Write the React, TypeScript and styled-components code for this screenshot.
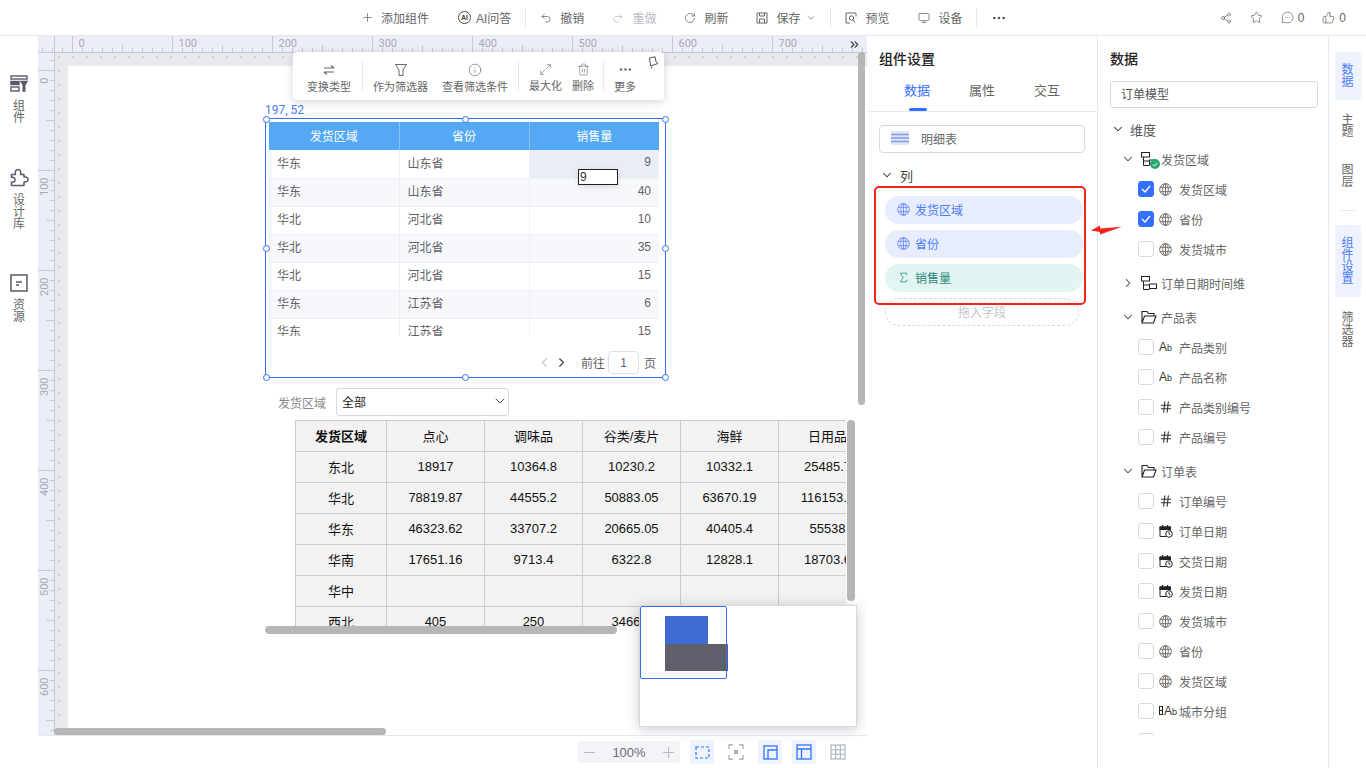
import React, { FC } from 'react';
import styled, { createGlobalStyle } from 'styled-components';
import {
  ChevronDown,
  ChevronLeft,
  ChevronRight,
  ChevronsRight,
  Hash,
  Info,
  Maximize2,
  MessageCircleMore,
  Minus,
  Monitor,
  MoreHorizontal,
  Plus,
  Redo2,
  RotateCw,
  Share2,
  Sigma,
  Star,
  ThumbsUp,
  Trash2,
  Undo2,
} from 'lucide-react';

const GlobalStyle = createGlobalStyle`
  html, body {
    margin: 0;
    padding: 0;
    height: 100%;
    overflow: hidden;
    background: #fff;
  }
  body {
    font-family: "Liberation Sans", "Noto Sans CJK SC", sans-serif;
    font-size: 12px;
    color: #666;
  }
  * {
    box-sizing: border-box;
  }
`;

const Shell = styled.div`
  width: 1366px;
  height: 768px;
  display: flex;
  flex-direction: column;
  overflow: hidden;
`;

/* top bar */
const TopBar = styled.header`
  height: 36px;
  flex: none;
  display: flex;
  align-items: center;
  gap: 14px;
  padding: 0 20px 0 361px;
  border-bottom: 1px solid #e8e9ef;
`;

const TopGroup = styled.div<{ $gap?: number }>`
  display: flex;
  align-items: center;
  gap: ${(p) => p.$gap ?? 29}px;
`;

const TopDivider = styled.i`
  width: 1px;
  height: 20px;
  background: #e8e9ef;
`;

const TopAction = styled.div<{ $off?: boolean; $gap?: number }>`
  display: flex;
  align-items: center;
  gap: ${(p) => p.$gap ?? 8}px;
  color: ${(p) => (p.$off ? '#b9bbc4' : '#666')};
  white-space: nowrap;
`;

const SaveCaret = styled.span`
  display: inline-flex;
  margin-left: -2px;
`;

const TopRight = styled.div`
  margin-left: auto;
  display: flex;
  align-items: center;
  gap: 18px;
`;

const Counter = styled.div`
  display: flex;
  align-items: center;
  gap: 4px;
  color: #666;
`;

const Main = styled.div`
  flex: 1;
  min-height: 0;
  display: flex;
  position: relative;
`;

/* left rail */
const LeftRail = styled.nav`
  width: 38px;
  flex: none;
  padding-top: 39px;
  display: flex;
  flex-direction: column;
  align-items: center;
`;

const RailEntry = styled.div<{ $h: number }>`
  height: ${(p) => p.$h}px;
  display: flex;
  flex-direction: column;
  align-items: center;
  gap: 7px;
`;

const StackText = styled.div<{ $active?: boolean }>`
  width: 12px;
  font-size: 12px;
  line-height: 12px;
  color: ${(p) => (p.$active ? '#4a7cf6' : '#666')};
`;

/* canvas */
const CanvasArea = styled.section`
  width: 829px;
  flex: none;
  display: flex;
  flex-direction: column;
  position: relative;
  overflow: hidden;
`;

const RulerRow = styled.div`
  height: 17px;
  flex: none;
  background: #eceef7;
`;

const StageRow = styled.div`
  flex: 1;
  min-height: 0;
  display: flex;
`;

const SideRuler = styled.div`
  width: 17px;
  flex: none;
  background: #eceef7;
`;

const Stage = styled.div`
  flex: 1;
  padding: 13px 0 0 13px;
  background-color: #e9eaee;
  background-image: radial-gradient(circle, #cfd0d7 1px, transparent 1.2px);
  background-size: 14px 14px;
  background-position: -3px -3px;
`;

const Page = styled.div`
  height: 100%;
  background: #fff;
`;

const BottomBar = styled.footer`
  height: 33px;
  flex: none;
  display: flex;
  align-items: center;
  padding-left: 540px;
  gap: 10px;
  background: #fff;
  border-top: 1px solid #e8e9ef;
`;

const ZoomBox = styled.div`
  width: 102px;
  height: 22px;
  display: flex;
  align-items: center;
  justify-content: space-between;
  padding: 0 3px;
  border-radius: 3px;
  font-size: 13px;
  background: #f3f4f8;
  color: #6a6d7c;
`;

const ViewButton = styled.div<{ $active?: boolean }>`
  width: 24px;
  height: 24px;
  display: flex;
  align-items: center;
  justify-content: center;
  border-radius: 3px;
  background: ${(p) => (p.$active ? '#eef3fe' : 'transparent')};
`;

const ScrollThumb = styled.i<{ $x: number; $y: number; $w: number; $h: number }>`
  position: absolute;
  left: ${(p) => p.$x}px;
  top: ${(p) => p.$y}px;
  width: ${(p) => p.$w}px;
  height: ${(p) => p.$h}px;
  border-radius: 4px;
  background: #b6b6b6;
  z-index: 6;
`;

const RulerExpand = styled.div`
  position: absolute;
  right: 6px;
  top: 0;
  height: 16px;
  display: flex;
  align-items: center;
  color: #444;
`;

/* floating toolbar */
const FloatBar = styled.div`
  position: absolute;
  left: 255px;
  top: 16px;
  width: 371px;
  height: 48px;
  display: flex;
  align-items: center;
  padding: 4px 0 0 14px;
  background: #fff;
  border-radius: 4px;
  box-shadow: 0 2px 8px rgba(60, 64, 90, 0.22);
  z-index: 5;
`;

const FloatItem = styled.div<{ $gapRight?: number }>`
  display: flex;
  flex-direction: column;
  align-items: center;
  gap: 4px;
  margin-right: ${(p) => p.$gapRight ?? 0}px;
  font-size: 11px;
  line-height: 13px;
  white-space: nowrap;
`;

const FloatDivider = styled.i`
  width: 1px;
  height: 30px;
  margin: -4px 10.5px 0;
  background: #e6e7ec;
`;

const PinHolder = styled.div`
  position: absolute;
  right: 5px;
  top: 4px;
`;

/* first widget */
const CoordLabel = styled.div`
  position: absolute;
  left: 227px;
  top: 67px;
  font-family: Roboto, "Liberation Sans", sans-serif;
  font-size: 12px;
  line-height: 14px;
  color: #4a7cf6;
`;

const Selection = styled.div`
  position: absolute;
  left: 227px;
  top: 82px;
  width: 401px;
  height: 260px;
  padding: 3px 3px 0;
  display: flex;
  flex-direction: column;
  border: 1px solid #3370ff;
`;

const Handle = styled.i<{ $x: string; $y: string }>`
  position: absolute;
  left: ${(p) => p.$x};
  top: ${(p) => p.$y};
  width: 7px;
  height: 7px;
  margin: -3.5px 0 0 -3.5px;
  border: 1px solid #3370ff;
  border-radius: 50%;
  background: #fff;
`;

const TableClip = styled.div`
  height: 214px;
  flex: none;
  overflow: hidden;
`;

const DetailTable = styled.table`
  width: 390px;
  table-layout: fixed;
  border-collapse: collapse;
  font-size: 12px;
  color: #606266;
`;

const DetailHead = styled.th`
  height: 28px;
  padding: 0 0 2px;
  font-weight: 400;
  color: #fff;
  background: #55a9f4;
  border-right: 1px solid #8ac4f7;
  &:last-child {
    border-right: 0;
  }
`;

const DetailRow = styled.tr<{ $even: boolean }>`
  height: 28px;
  background: ${(p) => (p.$even ? '#f7f8fc' : '#fff')};
  border-bottom: 1px solid #eef0f6;
`;

const DetailCell = styled.td<{ $num?: boolean; $selected?: boolean }>`
  padding: 0 8px 3px;
  text-align: ${(p) => (p.$num ? 'right' : 'left')};
  background: ${(p) => (p.$selected ? '#e9edf6' : 'transparent')};
  border-right: 1px solid #eef0f6;
  &:last-child {
    border-right: 0;
  }
`;

const CellEditor = styled.div`
  position: absolute;
  left: 312px;
  top: 50px;
  width: 40px;
  height: 16px;
  padding-left: 1px;
  font-size: 12px;
  line-height: 14px;
  color: #333;
  background: #fff;
  border: 1px solid #222;
  box-shadow: 0 2px 6px rgba(0, 0, 0, 0.12);
`;

const Pager = styled.div`
  flex: 1;
  display: flex;
  align-items: center;
  justify-content: flex-end;
  gap: 3px;
  padding: 12px 6px 0 0;
  color: #606266;
`;

const PagerArrows = styled.div`
  display: flex;
  align-items: center;
  gap: 2px;
  margin: 0 9px 0 0;
`;

const PagerInput = styled.div`
  width: 31px;
  height: 23px;
  margin-right: 2px;
  display: flex;
  align-items: center;
  justify-content: center;
  border: 1px solid #dcdfe6;
  border-radius: 4px;
`;

/* filter + pivot */
const FilterRow = styled.div`
  position: absolute;
  left: 240px;
  top: 352px;
  display: flex;
  align-items: center;
  gap: 10px;
  color: #888;
`;

const FilterSelect = styled.div`
  width: 173px;
  height: 28px;
  display: flex;
  align-items: center;
  justify-content: space-between;
  padding: 0 0 2px 5px;
  color: #222;
  background: #fff;
  border: 1px solid #d7d9e6;
  border-radius: 3px;
`;

const PivotClip = styled.div`
  position: absolute;
  left: 257px;
  top: 384px;
  width: 551px;
  height: 207px;
  overflow: hidden;
`;

const PivotTable = styled.table`
  width: 579px;
  table-layout: fixed;
  border-collapse: collapse;
  font-size: 13px;
  color: #111;
  background: #f2f2f2;
`;

const PivotCell = styled.td<{ $head?: boolean }>`
  height: ${(p) => (p.$head ? 30 : 31)}px;
  padding: 0 0 2px;
  text-align: center;
  white-space: nowrap;
  font-weight: ${(p) => (p.$head ? 700 : 400)};
  border: 1px solid #cbcbcb;
`;

/* minimap */
const MiniMap = styled.div`
  position: absolute;
  left: 601px;
  top: 569px;
  width: 218px;
  height: 122px;
  background: #fff;
  border: 1px solid #d9d9d9;
  box-shadow: 0 2px 12px rgba(60, 64, 90, 0.28);
  z-index: 7;
`;

const MiniFrame = styled.div`
  position: absolute;
  left: 0;
  top: 0;
  width: 87px;
  height: 73px;
  border: 1px solid #3370ff;
  border-radius: 2px;
  z-index: 2;
`;

const MiniBlock = styled.i<{ $x: number; $y: number; $w: number; $h: number; $c: string }>`
  position: absolute;
  left: ${(p) => p.$x}px;
  top: ${(p) => p.$y}px;
  width: ${(p) => p.$w}px;
  height: ${(p) => p.$h}px;
  background: ${(p) => p.$c};
`;

/* side panels */
const Panel = styled.aside`
  width: 231px;
  flex: none;
  display: flex;
  flex-direction: column;
  position: relative;
  border-right: 1px solid #e8e9ef;
`;

const PanelTitle = styled.h2`
  height: 36px;
  margin: 5px 0 0 12px;
  font-size: 14px;
  line-height: 36px;
  font-weight: 500;
  color: #222;
`;

const Tabs = styled.div`
  height: 35px;
  flex: none;
  display: flex;
  padding-left: 17.5px;
  border-bottom: 1px solid #e8e9ef;
`;

const Tab = styled.div<{ $active?: boolean }>`
  width: 65px;
  position: relative;
  text-align: center;
  font-size: 13px;
  line-height: 28px;
  color: ${(p) => (p.$active ? '#3370ff' : '#666')};
  ${(p) =>
    p.$active &&
    `&::after {
      content: '';
      position: absolute;
      left: 24px;
      bottom: 0;
      width: 18px;
      height: 3px;
      border-radius: 2px;
      background: #3370ff;
    }`}
`;

const TypePicker = styled.div`
  height: 28px;
  margin: 13px 12px 0;
  display: flex;
  align-items: center;
  gap: 12px;
  padding: 0 0 2px 11px;
  border: 1px solid #d7d9e6;
  border-radius: 4px;
`;

const ColumnsHead = styled.div`
  height: 20px;
  margin-top: 12px;
  padding-left: 13px;
  display: flex;
  align-items: center;
  gap: 6px;
  font-size: 13px;
  color: #444;
`;

const PillList = styled.div`
  margin: 11px 0 0 18px;
  display: flex;
  flex-direction: column;
  gap: 6px;
`;

const Pill = styled.div<{ $measure?: boolean }>`
  width: 198px;
  height: 28px;
  display: flex;
  align-items: center;
  gap: 5px;
  padding: 0 0 1px 12px;
  border-radius: 14px;
  color: ${(p) => (p.$measure ? '#2c8a7a' : '#4a7cf6')};
  background: ${(p) => (p.$measure ? '#e3f5f3' : '#e8edfe')};
`;

const DropSlot = styled.div`
  width: 194px;
  height: 28px;
  display: flex;
  align-items: center;
  justify-content: center;
  padding-bottom: 2px;
  color: #c4c5cc;
  border: 1px dashed #d7d9e6;
  border-radius: 14px;
`;

const RedFrame = styled.div`
  position: absolute;
  left: 7px;
  top: 150px;
  width: 212px;
  height: 119px;
  border: 2px solid #f5221b;
  border-radius: 5px;
  pointer-events: none;
`;

const RedArrow = styled.svg`
  position: absolute;
  left: 1090px;
  top: 188px;
  z-index: 9;
`;

const ModelSelect = styled.div`
  height: 27px;
  margin: 4px 10px 0 12px;
  display: flex;
  align-items: center;
  padding: 0 0 2px 10px;
  color: #555;
  border: 1px solid #d7d9e6;
  border-radius: 3px;
`;

const Tree = styled.div`
  height: 621px;
  margin-top: 6px;
  overflow: hidden;
`;

const TreeRoot = styled.div`
  height: 30px;
  display: flex;
  align-items: center;
  gap: 5px;
  padding-left: 13px;
  font-size: 13px;
  color: #555;
`;

const TreeNode = styled.div<{ $spaced?: boolean }>`
  height: 30px;
  margin-top: ${(p) => (p.$spaced ? 4 : 0)}px;
  display: flex;
  align-items: center;
  padding-left: 23px;
  color: #666;
`;

const NodeIcon = styled.span`
  width: 16px;
  height: 16px;
  margin: 0 4px 0 6px;
  position: relative;
  display: inline-flex;
`;

const TreeLeaf = styled.div`
  height: 30px;
  display: flex;
  align-items: center;
  padding-left: 40px;
  color: #666;
`;

const Check = styled.span<{ $on?: boolean }>`
  width: 16px;
  height: 16px;
  flex: none;
  display: inline-flex;
  align-items: center;
  justify-content: center;
  border: 1px solid ${(p) => (p.$on ? '#3370ff' : '#d7d9e6')};
  border-radius: 3px;
  background: ${(p) => (p.$on ? '#3370ff' : '#fff')};
`;

const LeafGlyph = styled.span`
  width: 20px;
  margin-left: 5px;
  flex: none;
  display: inline-flex;
  align-items: center;
  color: #333;
`;

const AbText = styled.span`
  font-size: 12px;
  line-height: 12px;
  color: #333;
  display: inline-flex;
  align-items: baseline;
  small {
    font-size: 9px;
  }
`;

const GroupBar = styled.i`
  width: 4px;
  height: 9px;
  margin-right: 1px;
  border: 1px solid #222;
  background: linear-gradient(#222 0 0) center / 100% 1px no-repeat;
`;

const RightRail = styled.nav`
  width: 37px;
  flex: none;
  padding-top: 16px;
  display: flex;
  flex-direction: column;
  align-items: center;
`;

const RailTab = styled.div<{ $h: number; $active?: boolean; $mb?: number }>`
  width: 26px;
  height: ${(p) => p.$h}px;
  flex: none;
  margin-bottom: ${(p) => p.$mb ?? 0}px;
  display: flex;
  align-items: center;
  justify-content: center;
  border-radius: 3px;
  background: ${(p) => (p.$active ? '#eef2fe' : 'transparent')};
`;

const RailRule = styled.i`
  width: 14px;
  height: 1px;
  flex: none;
  margin-bottom: 14px;
  background: #e8e9ef;
`;

/* drawn icons */
const GlobeIcon: FC<{ color?: string; size?: number }> = ({ color = '#6f6862', size = 13 }) => (
  <svg width={size} height={size} viewBox="0 0 12 12" fill="none" stroke={color} strokeWidth="0.85">
    <circle cx="6" cy="6" r="5.4" />
    <ellipse cx="6" cy="6" rx="2.6" ry="5.4" />
    <path d="M6 .6v10.800M1 4h10M1 8h10" />
  </svg>
);

const HierarchyIcon: FC = () => (
  <svg width="16" height="16" viewBox="0 0 16 16" fill="none" stroke="#222" strokeWidth="1">
    <rect x="0.5" y="1.500" width="8" height="4.500" />
    <rect x="8.500" y="9" width="7" height="4.500" />
    <path d="M2.500 6v8.500h6M2.500 10h6" />
  </svg>
);

const FolderIcon: FC = () => (
  <svg width="16" height="16" viewBox="0 0 16 16" fill="none" stroke="#222" strokeWidth="1.100">
    <path d="M1 14V2.500h5l1.500 2h5.500v2.500M1 14h11.500l2.500-7H3.500z" />
  </svg>
);

const CalendarIcon: FC = () => (
  <svg width="14" height="14" viewBox="0 0 14 14" fill="none" stroke="#222" strokeWidth="1">
    <path d="M1 3h10.500v3.500M1 3v9.500h6" />
    <rect x="1" y="3" width="10.500" height="2.500" fill="#222" />
    <path d="M3.500 1v2M8.500 1v2" strokeWidth="1.300" />
    <circle cx="10" cy="10" r="3.300" fill="#fff" />
    <path d="M10 8.200V10l1.400.8" />
  </svg>
);

const OkBadge = styled.span`
  position: absolute;
  right: -3px;
  bottom: -2px;
  width: 10px;
  height: 10px;
  display: flex;
  align-items: center;
  justify-content: center;
  border-radius: 50%;
  background: #2ca772;
`;

const WidgetsIcon: FC = () => (
  <svg width="18" height="18" viewBox="0 0 18 18" fill="none" stroke="#555b6b" strokeWidth="1.4">
    <rect x="1" y="1" width="16" height="3" />
    <rect x="1" y="6.500" width="8" height="3" fill="#555b6b" />
    <rect x="1" y="12" width="8" height="4" />
    <path d="M11 6.500h6l-2.200 3.500v6h-1.600v-6z" fill="#555b6b" />
  </svg>
);

const PuzzleIcon: FC = () => (
  <svg width="19" height="19" viewBox="0 0 19 19" fill="none" stroke="#555b6b" strokeWidth="1.500" strokeLinejoin="round">
    <path d="M1.500 6.500h4c-.8-3 .5-5 2.500-5s3.300 2 2.500 5h3.500v2.500c3-.5 4 1 4 2.500s-1 3-4 2.500v3.500H1.500v-3.500c2.500 .5 3.500-.8 3.500-2.200S4 8.800 1.500 9.500z" />
  </svg>
);

const ResourceIcon: FC = () => (
  <svg width="18" height="18" viewBox="0 0 18 18" fill="none" stroke="#555b6b" strokeWidth="1.500">
    <rect x="1" y="1" width="16" height="16" />
    <path d="M6 8h6M6 11h3" />
  </svg>
);

const SwapIcon: FC = () => (
  <svg width="14" height="14" viewBox="0 0 14 14" fill="none" stroke="#666" strokeWidth="1.100">
    <path d="M2 5h10M9 2.500 12 5M12 9H2M5 11.500 2 9" />
  </svg>
);

const FunnelIcon: FC = () => (
  <svg width="14" height="14" viewBox="0 0 14 14" fill="none" stroke="#666" strokeWidth="1">
    <path d="M1.500 1.500h11L9 7v5.500H5V7z" />
  </svg>
);

const PinIcon: FC = () => (
  <svg width="12" height="13" viewBox="0 0 12 13" fill="none" stroke="#555" strokeWidth="1" strokeLinejoin="round">
    <path d="M2.500 2 8 .8l1 5 2 1.700-7.500 2.500-.2-2.500zM5 10.500 4 12.500" />
  </svg>
);

const SaveIcon: FC = () => (
  <svg width="12" height="12" viewBox="0 0 12 12" fill="none" stroke="#666" strokeWidth="1">
    <path d="M1 1h10v10H1zM3.500 1v3h5V1M3.500 11V7h5v4" />
  </svg>
);

const PreviewIcon: FC = () => (
  <svg width="12" height="12" viewBox="0 0 12 12" fill="none" stroke="#666" strokeWidth="1">
    <path d="M11 4.500V1H1v10h4" />
    <circle cx="6.500" cy="6" r="2.200" />
    <path d="M8 7.800 10 10.500" />
  </svg>
);

const AiIcon = styled.span`
  width: 13px;
  height: 13px;
  display: inline-flex;
  align-items: center;
  justify-content: center;
  border: 1px solid #444;
  border-radius: 50%;
  font-size: 7px;
  font-weight: 700;
  color: #444;
`;

const TableTypeIcon: FC = () => (
  <svg width="18" height="14" viewBox="0 0 18 14">
    <rect width="18" height="14" fill="#dfe4f7" />
    <path d="M0 3.500h18M0 7h18M0 10.500h18" stroke="#7f9be6" strokeWidth="1.400" />
  </svg>
);

const FrameIcon: FC = () => (
  <svg width="15" height="13" viewBox="0 0 15 13" fill="none" stroke="#3370ff" strokeWidth="1.200">
    <rect x="1" y="1" width="13" height="11" strokeDasharray="3 2" />
  </svg>
);

const FocusIcon: FC = () => (
  <svg width="16" height="16" viewBox="0 0 16 16" fill="none" stroke="#a9adbd" strokeWidth="1.300">
    <path d="M1 5V1h4M11 1h4v4M15 11v4h-4M5 15H1v-4" />
    <rect x="6" y="6" width="4" height="4" fill="#a9adbd" stroke="none" />
  </svg>
);

const LayoutIcon: FC = () => (
  <svg width="15" height="15" viewBox="0 0 15 15" fill="none" stroke="#3370ff" strokeWidth="1.300">
    <rect x="1" y="1" width="13" height="13" />
    <path d="M5 14V5h9" />
  </svg>
);

const PanesIcon: FC = () => (
  <svg width="16" height="16" viewBox="0 0 16 16" fill="none" stroke="#3370ff" strokeWidth="1.300">
    <rect x="1" y="1" width="14" height="14" />
    <path d="M1 5h14M5.500 5v10" />
  </svg>
);

const GridIcon: FC = () => (
  <svg width="16" height="16" viewBox="0 0 16 16" fill="none" stroke="#a9adbd" strokeWidth="1.100">
    <rect x="1" y="1" width="14" height="14" />
    <path d="M1 5.700h14M1 10.300h14M5.700 1v14M10.300 1v14" />
  </svg>
);

/* rulers */
const TopRuler: FC = () => {
  const marks: React.ReactNode[] = [];
  for (let i = -3; i <= 79; i += 1) {
    const x = 34.5 + i * 10;
    const len = i % 10 === 0 ? 16 : i % 5 === 0 ? 7 : 4;
    marks.push(<path key={i} d={`M${x} 16V${16 - len}`} stroke="#c6c8d8" />);
    if (i % 10 === 0 && i >= 0) {
      marks.push(
        <text key={`t${i}`} x={x + 6} y={11} fontSize="11" fill="#a6a8b6" fontFamily="Roboto, sans-serif">
          {i * 10}
        </text>,
      );
    }
  }
  return (
    <svg width="829" height="17" viewBox="0 0 829 17">
      {marks}
      <path d="M16.500 0v17" stroke="#c6c8d8" />
      <path d="M0 16.500h829" stroke="#c6c8d8" />
    </svg>
  );
};

const LeftRuler: FC = () => {
  const marks: React.ReactNode[] = [];
  for (let i = -1; i <= 67; i += 1) {
    const y = 17.5 + i * 10;
    const len = i % 10 === 0 ? 16 : i % 5 === 0 ? 8 : 4;
    marks.push(<path key={i} d={`M16 ${y}H${16 - len}`} stroke="#c6c8d8" />);
    if (i % 10 === 0 && i >= 0) {
      const ty = y + 7;
      marks.push(
        <text
          key={`t${i}`}
          x={10}
          y={ty}
          fontSize="11"
          fill="#a6a8b6"
          fontFamily="Roboto, sans-serif"
          textAnchor="end"
          transform={`rotate(-90 10 ${ty})`}
        >
          {i * 10}
        </text>,
      );
    }
  }
  return (
    <svg width="17" height="683" viewBox="0 0 17 683">
      {marks}
      <path d="M16.500 0v683" stroke="#c6c8d8" />
    </svg>
  );
};

const detailRows = [
  ['华东', '山东省', '9'],
  ['华东', '山东省', '40'],
  ['华北', '河北省', '10'],
  ['华北', '河北省', '35'],
  ['华北', '河北省', '15'],
  ['华东', '江苏省', '6'],
  ['华东', '江苏省', '15'],
];

const pivotHead = ['发货区域', '点心', '调味品', '谷类/麦片', '海鲜', '日用品'];
const pivotRows = [
  ['东北', '18917', '10364.8', '10230.2', '10332.1', '25485.7'],
  ['华北', '78819.87', '44555.2', '50883.05', '63670.19', '116153.4'],
  ['华东', '46323.62', '33707.2', '20665.05', '40405.4', '55538'],
  ['华南', '17651.16', '9713.4', '6322.8', '12828.1', '18703.6'],
  ['华中', '', '', '', '', ''],
  ['西北', '405', '250', '3466.5', '', ''],
];

const handles: [string, string][] = [
  ['0', '0'],
  ['50%', '0'],
  ['100%', '0'],
  ['0', '50%'],
  ['100%', '50%'],
  ['0', '100%'],
  ['50%', '100%'],
  ['100%', '100%'],
];

type LeafKind = 'geo' | 'text' | 'num' | 'date' | 'group';

const leafGlyph = (kind: LeafKind) => {
  if (kind === 'geo') return <GlobeIcon />;
  if (kind === 'num') return <Hash size={14} strokeWidth={1.9} color="#333" />;
  if (kind === 'date') return <CalendarIcon />;
  if (kind === 'text') {
    return (
      <AbText>
        A<small>b</small>
      </AbText>
    );
  }
  return (
    <AbText>
      <GroupBar />A<small>b</small>
    </AbText>
  );
};

const Leaf: FC<{ label: string; kind: LeafKind; on?: boolean }> = ({ label, kind, on }) => (
  <TreeLeaf>
    <Check $on={on}>
      {on && (
        <svg width="10" height="8" viewBox="0 0 10 8" fill="none" stroke="#fff" strokeWidth="1.300">
          <path d="M1 4l3 3 5-6" />
        </svg>
      )}
    </Check>
    <LeafGlyph>{leafGlyph(kind)}</LeafGlyph>
    {label}
  </TreeLeaf>
);

const Node: FC<{ label: string; open?: boolean; spaced?: boolean; folder?: boolean; ok?: boolean }> = ({
  label,
  open,
  spaced,
  folder,
  ok,
}) => (
  <TreeNode $spaced={spaced}>
    {open ? <ChevronDown size={14} strokeWidth={1.8} color="#444" /> : <ChevronRight size={14} strokeWidth={1.8} color="#444" />}
    <NodeIcon>
      {folder ? <FolderIcon /> : <HierarchyIcon />}
      {ok && (
        <OkBadge>
          <svg width="6" height="5" viewBox="0 0 6 5" fill="none" stroke="#fff" strokeWidth="1">
            <path d="M.8 2.500 2.300 4 5.200 1" />
          </svg>
        </OkBadge>
      )}
    </NodeIcon>
    {label}
  </TreeNode>
);

export default function App() {
  return (
    <Shell>
      <GlobalStyle />
      <TopBar>
        <TopGroup>
          <TopAction $gap={7}>
            <Plus size={13} strokeWidth={1.4} />
            添加组件
          </TopAction>
          <TopAction $gap={5}>
            <AiIcon>AI</AiIcon>
            AI问答
          </TopAction>
        </TopGroup>
        <TopDivider />
        <TopGroup $gap={28}>
          <TopAction>
            <Undo2 size={12} strokeWidth={1.5} />
            撤销
          </TopAction>
          <TopAction $off>
            <Redo2 size={12} strokeWidth={1.5} />
            重做
          </TopAction>
          <TopAction>
            <RotateCw size={12} strokeWidth={1.5} />
            刷新
          </TopAction>
          <TopAction>
            <SaveIcon />
            保存
            <SaveCaret>
              <ChevronDown size={10} strokeWidth={1.8} />
            </SaveCaret>
          </TopAction>
        </TopGroup>
        <TopDivider />
        <TopGroup>
          <TopAction>
            <PreviewIcon />
            预览
          </TopAction>
          <TopAction>
            <Monitor size={12} strokeWidth={1.4} />
            设备
          </TopAction>
        </TopGroup>
        <TopDivider />
        <MoreHorizontal size={16} strokeWidth={2} color="#555" />
        <TopRight>
          <Share2 size={12} strokeWidth={1.4} />
          <Star size={13} strokeWidth={1.4} />
          <Counter>
            <MessageCircleMore size={13} strokeWidth={1.3} />0
          </Counter>
          <Counter>
            <ThumbsUp size={13} strokeWidth={1.3} />0
          </Counter>
        </TopRight>
      </TopBar>

      <Main>
        <LeftRail>
          <RailEntry $h={93}>
            <WidgetsIcon />
            <StackText>组件</StackText>
          </RailEntry>
          <RailEntry $h={106}>
            <PuzzleIcon />
            <StackText>设计库</StackText>
          </RailEntry>
          <RailEntry $h={60}>
            <ResourceIcon />
            <StackText>资源</StackText>
          </RailEntry>
        </LeftRail>

        <CanvasArea>
          <RulerRow>
            <TopRuler />
          </RulerRow>
          <RulerExpand>
            <ChevronsRight size={13} strokeWidth={2.2} />
          </RulerExpand>
          <StageRow>
            <SideRuler>
              <LeftRuler />
            </SideRuler>
            <Stage>
              <Page />
            </Stage>
          </StageRow>
          <BottomBar>
            <ZoomBox>
              <Minus size={17} strokeWidth={1.2} color="#a9adbd" />
              100%
              <Plus size={17} strokeWidth={1.2} color="#a9adbd" />
            </ZoomBox>
            <ViewButton $active>
              <FrameIcon />
            </ViewButton>
            <ViewButton>
              <FocusIcon />
            </ViewButton>
            <ViewButton $active>
              <LayoutIcon />
            </ViewButton>
            <ViewButton $active>
              <PanesIcon />
            </ViewButton>
            <ViewButton>
              <GridIcon />
            </ViewButton>
          </BottomBar>

          <FloatBar>
            <FloatItem>
              <SwapIcon />
              变换类型
            </FloatItem>
            <FloatDivider />
            <FloatItem $gapRight={14}>
              <FunnelIcon />
              作为筛选器
            </FloatItem>
            <FloatItem $gapRight={-1}>
              <Info size={14} strokeWidth={1.1} />
              查看筛选条件
            </FloatItem>
            <FloatDivider />
            <FloatItem $gapRight={10}>
              <Maximize2 size={13} strokeWidth={1.1} />
              最大化
            </FloatItem>
            <FloatItem $gapRight={-2}>
              <Trash2 size={13} strokeWidth={1.1} />
              删除
            </FloatItem>
            <FloatDivider />
            <FloatItem>
              <MoreHorizontal size={15} strokeWidth={2} />
              更多
            </FloatItem>
            <PinHolder>
              <PinIcon />
            </PinHolder>
          </FloatBar>

          <CoordLabel>197, 52</CoordLabel>
          <Selection>
            <TableClip>
              <DetailTable>
                <thead>
                  <tr>
                    <DetailHead>发货区域</DetailHead>
                    <DetailHead>省份</DetailHead>
                    <DetailHead>销售量</DetailHead>
                  </tr>
                </thead>
                <tbody>
                  {detailRows.map((row, i) => (
                    <DetailRow key={i} $even={i % 2 === 1}>
                      <DetailCell>{row[0]}</DetailCell>
                      <DetailCell>{row[1]}</DetailCell>
                      <DetailCell $num $selected={i === 0}>
                        {row[2]}
                      </DetailCell>
                    </DetailRow>
                  ))}
                </tbody>
              </DetailTable>
            </TableClip>
            <Pager>
              <PagerArrows>
                <ChevronLeft size={15} strokeWidth={1.8} color="#c0c4cc" />
                <ChevronRight size={15} strokeWidth={1.8} color="#444" />
              </PagerArrows>
              前往
              <PagerInput>1</PagerInput>页
            </Pager>
            <CellEditor>9</CellEditor>
            {handles.map(([x, y]) => (
              <Handle key={`${x}-${y}`} $x={x} $y={y} />
            ))}
          </Selection>

          <FilterRow>
            发货区域
            <FilterSelect>
              全部
              <ChevronDown size={16} strokeWidth={1.4} color="#444" />
            </FilterSelect>
          </FilterRow>

          <PivotClip>
            <PivotTable>
              <colgroup>
                <col width={91} />
                <col width={98} />
                <col width={98} />
                <col width={98} />
                <col width={98} />
                <col width={98} />
              </colgroup>
              <tbody>
                <tr>
                  {pivotHead.map((h, i) => (
                    <PivotCell key={h} $head={i === 0}>
                      {h}
                    </PivotCell>
                  ))}
                </tr>
                {pivotRows.map((row) => (
                  <tr key={row[0]}>
                    {row.map((v, i) => (
                      <PivotCell key={i}>{v}</PivotCell>
                    ))}
                  </tr>
                ))}
              </tbody>
            </PivotTable>
          </PivotClip>
          <ScrollThumb $x={809} $y={384} $w={8} $h={181} />
          <ScrollThumb $x={227} $y={590} $w={352} $h={8} />
          <ScrollThumb $x={820} $y={16} $w={7} $h={353} />
          <ScrollThumb $x={16} $y={692} $w={332} $h={7} />

          <MiniMap>
            <MiniFrame />
            <MiniBlock $x={25} $y={10} $w={43} $h={28} $c="#3f6bd2" />
            <MiniBlock $x={25} $y={38} $w={63} $h={27} $c="#5f5f6b" />
          </MiniMap>
        </CanvasArea>

        <Panel>
          <PanelTitle>组件设置</PanelTitle>
          <Tabs>
            <Tab $active>数据</Tab>
            <Tab>属性</Tab>
            <Tab>交互</Tab>
          </Tabs>
          <TypePicker>
            <TableTypeIcon />
            明细表
          </TypePicker>
          <ColumnsHead>
            <ChevronDown size={14} strokeWidth={1.8} color="#333" />列
          </ColumnsHead>
          <PillList>
            <Pill>
              <GlobeIcon color="#6f8ff5" />
              发货区域
            </Pill>
            <Pill>
              <GlobeIcon color="#6f8ff5" />
              省份
            </Pill>
            <Pill $measure>
              <Sigma size={13} strokeWidth={1.5} />
              销售量
            </Pill>
            <DropSlot>拖入字段</DropSlot>
          </PillList>
          <RedFrame />
        </Panel>

        <Panel>
          <PanelTitle>数据</PanelTitle>
          <ModelSelect>订单模型</ModelSelect>
          <Tree>
            <TreeRoot>
              <ChevronDown size={14} strokeWidth={1.8} color="#333" />
              维度
            </TreeRoot>
            <Node label="发货区域" open ok />
            <Leaf label="发货区域" kind="geo" on />
            <Leaf label="省份" kind="geo" on />
            <Leaf label="发货城市" kind="geo" />
            <Node label="订单日期时间维" spaced />
            <Node label="产品表" open folder spaced />
            <Leaf label="产品类别" kind="text" />
            <Leaf label="产品名称" kind="text" />
            <Leaf label="产品类别编号" kind="num" />
            <Leaf label="产品编号" kind="num" />
            <Node label="订单表" open folder spaced />
            <Leaf label="订单编号" kind="num" />
            <Leaf label="订单日期" kind="date" />
            <Leaf label="交货日期" kind="date" />
            <Leaf label="发货日期" kind="date" />
            <Leaf label="发货城市" kind="geo" />
            <Leaf label="省份" kind="geo" />
            <Leaf label="发货区域" kind="geo" />
            <Leaf label="城市分组" kind="group" />
            <TreeLeaf>
              <Check />
            </TreeLeaf>
          </Tree>
        </Panel>

        <RightRail>
          <RailTab $h={48} $active $mb={8}>
            <StackText $active>数据</StackText>
          </RailTab>
          <RailTab $h={36} $mb={14}>
            <StackText>主题</StackText>
          </RailTab>
          <RailTab $h={36} $mb={16}>
            <StackText>图层</StackText>
          </RailTab>
          <RailRule />
          <RailTab $h={72} $active $mb={9}>
            <StackText $active>组件设置</StackText>
          </RailTab>
          <RailTab $h={48}>
            <StackText>筛选器</StackText>
          </RailTab>
        </RightRail>

        <RedArrow width="34" height="12" viewBox="0 0 34 12">
          <path d="M1 6.500 10 1.500v3L32 2.700 10 10.500V8z" fill="#f5221b" />
        </RedArrow>
      </Main>
    </Shell>
  );
}
